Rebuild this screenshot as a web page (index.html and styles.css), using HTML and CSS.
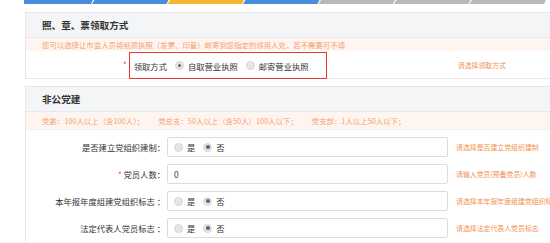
FILE: index.html
```html
<!DOCTYPE html>
<html lang="zh">
<head>
<meta charset="utf-8">
<link rel="stylesheet" href="styles.css">
</head>
<body>
<div class="steps">
  <div class="step blue first"></div>
  <div class="step blue"></div>
  <div class="step orange"></div>
  <div class="step blue"></div>
  <div class="step gray"></div>
  <div class="step gray"></div>
  <div class="step gray"></div>
</div>

<section class="panel p1">
  <div class="panel-head">照、章、票领取方式</div>
  <div class="notice">您可以选择让市监人员将纸质执照（发票、印章）邮寄到您指定的领用人处，若不需要可不填</div>
  <div class="pick-row">
    <span class="req">*</span>
    <div class="mark">
      <span class="pick-label">领取方式</span>
      <span class="radio on"></span><span class="opt">自取营业执照</span>
      <span class="radio"></span><span class="opt">邮寄营业执照</span>
    </div>
    <span class="hint pick-hint">请选择领取方式</span>
  </div>
</section>

<section class="panel p2">
  <div class="panel-head">非公党建</div>
  <div class="notice tall"><span>党委：100人以上（含100人）；</span><span>党总支：50人以上（含50人）100人以下；</span><span>党支部：1人以上50人以下；</span></div>
  <div class="form-row">
    <label class="lbl">是否建立党组织建制：</label>
    <div class="box"><span class="radio"></span><span class="opt">是</span><span class="radio on"></span><span class="opt">否</span></div>
    <span class="hint">请选择是否建立党组织建制</span>
  </div>
  <div class="form-row">
    <label class="lbl"><span class="req">*</span> 党员人数：</label>
    <div class="box"><span class="val">0</span></div>
    <span class="hint">请输入党员(预备党员)人数</span>
  </div>
  <div class="form-row">
    <label class="lbl">本年报年度组建党组织标志 ：</label>
    <div class="box"><span class="radio"></span><span class="opt">是</span><span class="radio on"></span><span class="opt">否</span></div>
    <span class="hint">请选择本年报年度组建党组织标志</span>
  </div>
  <div class="form-row">
    <label class="lbl">法定代表人党员标志 ：</label>
    <div class="box"><span class="radio"></span><span class="opt">是</span><span class="radio on"></span><span class="opt">否</span></div>
    <span class="hint">请选择法定代表人党员标志</span>
  </div>
  <div class="form-row">
    <label class="lbl"></label>
    <div class="box"></div>
    <span class="hint"></span>
  </div>
</section>
</body>
</html>
```

FILE: styles.css
```css
* { box-sizing: border-box; }
html, body { margin: 0; padding: 0; background: #fff; }
body {
  font-family: "Noto Sans CJK SC", "Noto Sans", "Liberation Sans", sans-serif;
  color: #333;
  overflow: hidden;
  width: 550px;
  height: 243px;
}

.steps {
  display: flex;
  margin-left: 24px;
  height: 4px;
  width: 560px;
}
.step {
  width: 76.5px;
  flex: none;
  margin-right: -1px;
  clip-path: polygon(2.5px 0, 100% 0, calc(100% - 2px) 100%, 0 100%);
}
.step.first { clip-path: polygon(0 0, 100% 0, calc(100% - 2px) 100%, 0 100%); width: 69px; }
.blue { background: #4a8ddb; }
.orange { background: #f6b631; }
.gray { background: #b8b8b8; }

.panel {
  margin-left: 25px;
  border: 1px solid #e7e7e7;
  border-right: none;
  width: 540px;
}
.p1 { margin-top: 8px; }
.p2 { margin-top: 7px; border-bottom: none; }

.panel-head {
  height: 25px;
  background: #f4f5f7;
  border-bottom: 1px solid #e8e8e8;
  padding-left: 16px;
  font-size: 9.6px;
  font-weight: bold;
  color: #333;
  display: flex;
  align-items: center;
}

.notice {
  height: 13px;
  background: #fff5f0;
  color: #f4a26e;
  font-size: 7.4px;
  padding-left: 16px;
  display: flex;
  align-items: center;
  white-space: nowrap;
}
.notice.tall { height: 18px; gap: 14px; border-bottom: 1px solid #fbeee6; }

.pick-row {
  height: 27px;
  display: flex;
  align-items: center;
  padding-left: 97px;
  font-size: 8.3px;
}
.req { color: #e8382e; font-size: 8px; }
.mark {
  margin-left: 2px;
  width: 198px;
  height: 27px;
  margin-top: 2px;
  border: 1.5px solid #e8372f;
  display: flex;
  align-items: center;
  padding-left: 4px;
  position: relative;
  z-index: 1;
  flex: none;
}
.pick-label { margin-right: 8px; }

.radio {
  width: 9px;
  height: 9px;
  border-radius: 50%;
  background: #e6e6e6;
  border: 1px solid #d6d6d6;
  display: inline-flex;
  align-items: center;
  justify-content: center;
  flex: none;
}
.radio.on::after {
  content: "";
  width: 3.5px;
  height: 3.5px;
  border-radius: 50%;
  background: #666;
}
.opt { margin: 0 8px 0 4px; white-space: nowrap; }

.form-row {
  display: flex;
  align-items: center;
  height: 27px;
  padding-top: 1px;
  font-size: 8.3px;
}
.p2 .notice + .form-row { margin-top: 3px; }
.lbl {
  width: 141px;
  flex: none;
  text-align: right;
  padding-right: 2px;
  white-space: nowrap;
}
.box {
  width: 281px;
  height: 20px;
  flex: none;
  border: 1px solid #dcdcdc;
  border-radius: 2px;
  display: flex;
  align-items: center;
  padding-left: 6px;
  background: #fff;
}
.val { font-size: 8.3px; }
.hint {
  color: #f0924f;
  font-size: 6.9px;
  margin-left: 8px;
  white-space: nowrap;
}
.pick-row .pick-hint { margin-left: 131px; }
```
